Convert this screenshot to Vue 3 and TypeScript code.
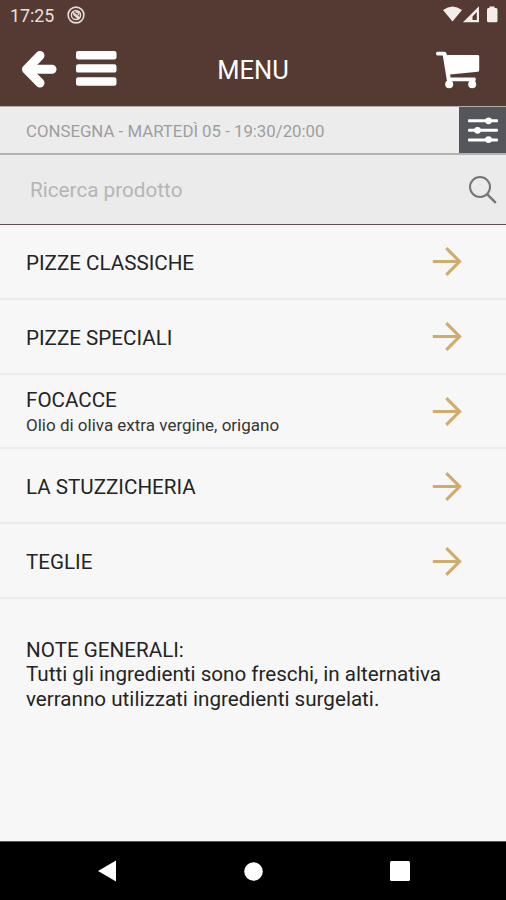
<script setup lang="ts">
interface Category {
  name: string
  detail?: string
}

const categories: Category[] = [
  { name: 'PIZZE CLASSICHE' },
  { name: 'PIZZE SPECIALI' },
  { name: 'FOCACCE', detail: 'Olio di oliva extra vergine, origano' },
  { name: 'LA STUZZICHERIA' },
  { name: 'TEGLIE' },
]
</script>

<template>
  <div class="screen">
    <div class="status">
      <span class="clock">17:25</span>
      <svg class="app-mark" width="18" height="18" viewBox="0 0 18 18" fill="none" stroke="#e5dcd8">
        <circle cx="9" cy="9" r="7.9" stroke-width="1.6" />
        <circle cx="9" cy="9" r="4.6" stroke-width="1.5" />
        <path d="M5.5 6.2 13 12.5M6.5 8.2l5 4.3M8.5 6.2h3v3" stroke-width="1.7" />
      </svg>
      <svg class="signals" width="56" height="18" viewBox="0 0 56 18" fill="#f3eeeb">
        <path d="M0 4Q9.5-3 19 4L9.5 15.6Z" />
        <path fill-rule="evenodd" d="M20 16.2 36 .3V16.2ZM29.5 14V10.5L33.8 6V14Z" />
        <path d="M46.500 2V.5h5V2h1.500q1.500 0 1.500 1.500v11.300q0 1.500-1.500 1.500h-7.500q-1.500 0-1.500-1.500V3.500q0-1.500 1.500-1.500Z" />
      </svg>
    </div>

    <header class="header">
      <button class="icon-button back" aria-label="Indietro">
        <svg width="36" height="38" viewBox="0 0 36 38" fill="none" stroke="#fff" stroke-linejoin="round">
          <path d="M19 5.500 5.500 19.300 19 33" stroke-width="9" stroke-linecap="round" />
          <path d="M6 19.300h25" stroke-width="9" stroke-linecap="round" />
        </svg>
      </button>
      <button class="icon-button burger" aria-label="Menu">
        <svg width="41" height="36" viewBox="0 0 41 36" fill="#fff">
          <rect width="40.500" height="8.400" rx="2.200" />
          <rect y="13.200" width="40.500" height="8.400" rx="2.200" />
          <rect y="26.300" width="40.500" height="8.400" rx="2.200" />
        </svg>
      </button>
      <h1 class="title">MENU</h1>
      <button class="icon-button cart" aria-label="Carrello">
        <svg width="46" height="39" viewBox="0 0 46 39" fill="#fff">
          <path d="M2.500 1.700h7q1.500 0 1.900 1.500L11.900 5h31q1.300 0 1.300 1.300v14q0 1.200-1.200 1.400L15 24.600l.6 3H39.500q1.300 0 1.300 1.800t-1.300 1.800H13.300q-1.200 0-1.500-1.300L7.800 5.500H2.500Q1 5.500 1 3.600t1.500-1.900Z" />
          <circle cx="14.200" cy="34.300" r="4" />
          <circle cx="37.200" cy="34.300" r="4" />
        </svg>
      </button>
    </header>

    <div class="delivery">
      <span class="slot">CONSEGNA - MARTEDÌ 05 - 19:30/20:00</span>
      <button class="filter" aria-label="Filtri">
        <svg width="30" height="26" viewBox="0 0 30 26" fill="#fff">
          <rect y="2.300" width="30" height="3" rx="1" />
          <rect y="11.800" width="30" height="3" rx="1" />
          <rect y="21.400" width="30" height="3" rx="1" />
          <circle cx="20.500" cy="3.800" r="3.400" />
          <circle cx="9.500" cy="13.300" r="3.400" />
          <circle cx="20.500" cy="22.600" r="3.400" />
        </svg>
      </button>
    </div>

    <div class="search">
      <span class="placeholder">Ricerca prodotto</span>
      <svg width="28" height="28" viewBox="0 0 28 28" fill="none" stroke="#757575" stroke-width="2">
        <circle cx="11" cy="11" r="10" />
        <path d="m18.300 18.300 8.500 8.500" stroke-width="2.400" />
      </svg>
    </div>

    <ul class="list">
      <li v-for="category in categories" :key="category.name" class="row">
        <div class="label">
          <span class="name">{{ category.name }}</span>
          <span v-if="category.detail" class="detail">{{ category.detail }}</span>
        </div>
        <svg width="30" height="30" viewBox="0 0 30 30" fill="none" stroke="#cfab6c" stroke-width="3.100">
          <path d="M.8 15.500H27M14.300 2.200 27.600 15.500 14.300 28.800" />
        </svg>
      </li>
    </ul>

    <section class="notes">
      <p>NOTE GENERALI:</p>
      <p>Tutti gli ingredienti sono freschi, in alternativa</p>
      <p>verranno utilizzati ingredienti surgelati.</p>
    </section>

    <nav class="navbar">
      <svg width="18" height="22" viewBox="0 0 18 22" fill="#fff"><path d="M0 11 18 .5v21Z" /></svg>
      <svg width="19" height="19" viewBox="0 0 19 19" fill="#fff"><circle cx="9.500" cy="9.500" r="9.300" /></svg>
      <svg width="20" height="20" viewBox="0 0 20 20" fill="#fff"><rect width="20" height="20" rx="1.500" /></svg>
    </nav>
  </div>
</template>

<style>
body {
  margin: 0;
  background: #f7f7f7;
}
</style>

<style scoped>
.screen {
  display: flex;
  flex-direction: column;
  width: 506px;
  height: 900px;
  overflow: hidden;
  background: #f7f7f7;
  color: #242424;
  font-family: Roboto, "Liberation Sans", sans-serif;
}
.screen * {
  box-sizing: border-box;
}
svg {
  display: block;
  flex: none;
}
button {
  padding: 0;
  border: 0;
  background: none;
}
.status {
  display: flex;
  align-items: center;
  height: 32px;
  padding: 0 6px 0 10px;
  background: #543a32;
}
.clock {
  width: 57px;
  color: #e9e0dc;
  font-size: 17.800px;
  line-height: 32px;
}
.app-mark {
  margin-top: -2px;
}
.signals {
  margin: -2px 1px 0 auto;
}
.header {
  display: grid;
  grid-template-columns: 76px 120px 114px 1fr;
  align-items: center;
  height: 74px;
  background: #543a32;
}
.back {
  padding-left: 21px;
}
.title {
  margin: 0;
  padding-top: 2px;
  color: #fff;
  font-size: 25.500px;
  font-weight: 400;
  line-height: 30px;
  text-align: center;
}
.cart {
  justify-self: end;
  padding-right: 25px;
}
.delivery {
  display: flex;
  flex: none;
  align-items: stretch;
  justify-content: space-between;
  height: 49px;
  border-top: 1px solid #b8aaa4;
  border-bottom: 2px solid #b3b3b3;
  background: #ececec;
}
.slot {
  padding-left: 26px;
  color: #9e9ea0;
  font-size: 16.800px;
  line-height: 48px;
  white-space: nowrap;
}
.filter {
  display: grid;
  width: 47px;
  place-items: center;
  background: #55565b;
}
.search {
  display: flex;
  flex: none;
  align-items: center;
  justify-content: space-between;
  height: 70px;
  padding: 0 9px 0 30px;
  border-bottom: 1px solid #5b5152;
  background: #ebebeb;
}
.placeholder {
  color: #b5b5b5;
  font-size: 20.700px;
}
.list {
  margin: 0;
  padding: 0;
  list-style: none;
}
.row {
  display: flex;
  align-items: center;
  justify-content: space-between;
  height: 74.800px;
  padding: 0 44px 0 26px;
  border-bottom: 2px solid #ececec;
}
.label {
  display: flex;
  flex-direction: column;
  padding-top: 3px;
}
.name {
  font-size: 20.600px;
  line-height: 26px;
}
.detail {
  color: #353535;
  font-size: 17px;
  line-height: 24px;
}
.notes {
  flex: 1;
  padding: 39px 26px 0;
  font-size: 20.630px;
  line-height: 24.500px;
}
.notes p {
  margin: 0;
  white-space: nowrap;
}
.navbar {
  display: grid;
  grid-template-columns: 147px 147px 145px;
  flex: none;
  justify-content: start;
  justify-items: center;
  align-items: center;
  height: 59px;
  padding-left: 33px;
  border-top: 1px solid #555;
  background: #000;
}
</style>
